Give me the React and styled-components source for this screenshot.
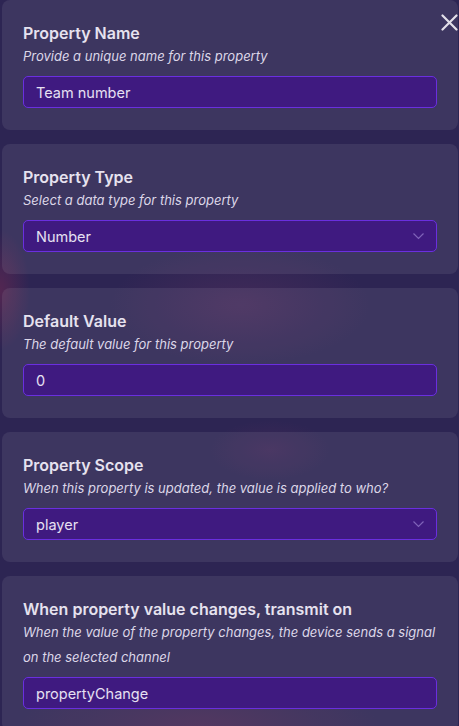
import React from "react";
import styled, { createGlobalStyle } from "styled-components";

const GlobalStyle = createGlobalStyle`
  html, body {
    margin: 0;
    padding: 0;
    background: #2d2553;
  }
  body {
    font-family: Inter, "Noto Sans", sans-serif;
    -webkit-font-smoothing: antialiased;
  }
`;

// blurred scene behind the modal
const Page = styled.div`
  position: relative;
  width: 459px;
  height: 726px;
  overflow: hidden;
  padding: 0 1px 0 2px;
  box-sizing: border-box;
  background:
    radial-gradient(ellipse 30px 60px at 0px 290px, rgba(140, 40, 80, 0.4), transparent),
    radial-gradient(ellipse 130px 60px at 240px 305px, rgba(120, 55, 105, 0.28), transparent),
    radial-gradient(ellipse 60px 30px at 270px 450px, rgba(110, 50, 100, 0.22), transparent),
    radial-gradient(ellipse 180px 50px at 200px 726px, rgba(120, 45, 85, 0.3), transparent),
    #2d2553;
`;

const Stack = styled.div`
  display: flex;
  flex-direction: column;
  gap: 14px;
`;

const Card = styled.section`
  background: rgba(255, 255, 255, 0.08);
  border-radius: 8px;
  padding: 22px 21px;
`;

const Title = styled.div`
  font-size: 16px;
  line-height: 22px;
  font-weight: 600;
  color: #e6e2ef;
`;

const Hint = styled.div`
  font-size: 13px;
  line-height: 25px;
  font-style: italic;
  color: #dcd6e8;
`;

const Field = styled.div`
  position: relative;
  margin-top: 7px;
  height: 32px;
  box-sizing: border-box;
  border: 1px solid #6a2fdf;
  border-radius: 5px;
  background: #3f1a80;
  display: flex;
  align-items: center;
  padding: 0 12px;
  font-size: 14.5px;
  color: #e6e0f2;
`;

const Chevron = styled.svg`
  position: absolute;
  right: 12px;
  top: 12px;
`;

const Close = styled.button`
  position: absolute;
  top: 14px;
  right: 1px;
  width: 17px;
  height: 17px;
  padding: 0;
  border: none;
  background: none;
  cursor: pointer;
`;

const fields = [
  { title: "Property Name", hint: "Provide a unique name for this property", value: "Team number" },
  { title: "Property Type", hint: "Select a data type for this property", value: "Number", select: true },
  { title: "Default Value", hint: "The default value for this property", value: "0" },
  {
    title: "Property Scope",
    hint: "When this property is updated, the value is applied to who?",
    value: "player",
    select: true,
  },
  {
    title: "When property value changes, transmit on",
    hint: "When the value of the property changes, the device sends a signal on the selected channel",
    value: "propertyChange",
  },
];

export default function App() {
  return (
    <Page>
      <GlobalStyle />
      <Stack>
        {fields.map((f) => (
          <Card key={f.title}>
            <Title>{f.title}</Title>
            <Hint>{f.hint}</Hint>
            <Field>
              {f.value}
              {f.select && (
                <Chevron width="11" height="7" viewBox="0 0 11 7">
                  <path d="M0.5 0.5 L5.5 5.5 L10.5 0.5" fill="none" stroke="#7f63b8" strokeWidth="1.2" />
                </Chevron>
              )}
            </Field>
          </Card>
        ))}
      </Stack>
      <Close aria-label="close">
        <svg width="17" height="17" viewBox="0 0 17 17">
          <path d="M1.5 1.5 L15.5 15.5 M15.5 1.5 L1.5 15.5" stroke="#e2dfe8" strokeWidth="2.2" strokeLinecap="round" />
        </svg>
      </Close>
    </Page>
  );
}
